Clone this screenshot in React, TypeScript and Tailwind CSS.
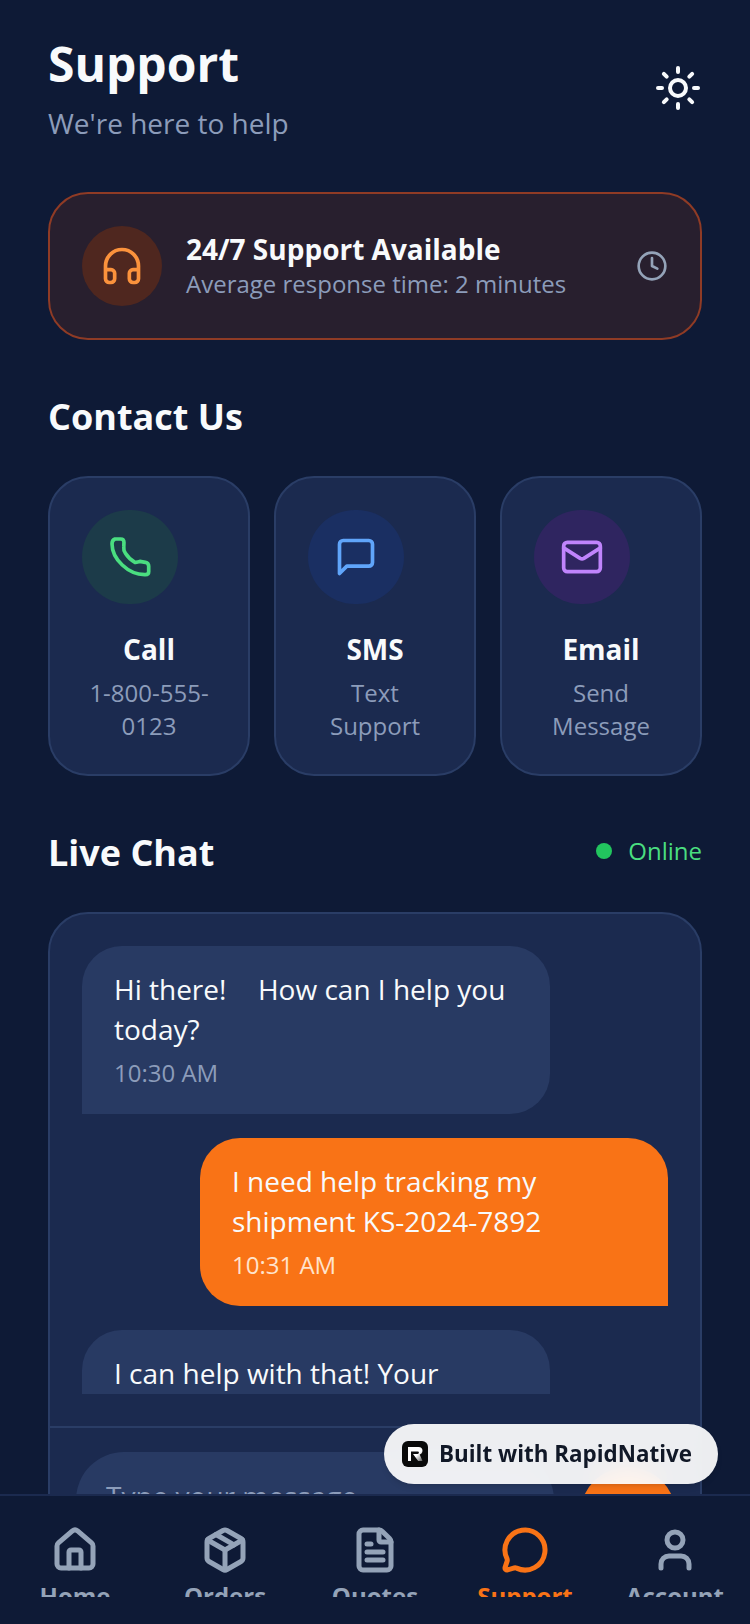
import { Clock, FileText, Headphones, House, Mail, MessageCircle, Package, Sun, User } from "lucide-react"

function PhoneIcon() {
  return (
    <svg width="44" height="44" viewBox="0 0 24 24" fill="none" stroke="#4ade80" strokeWidth="2" strokeLinejoin="round">
      <path d="M3.800 2.200H6.900Q8.700 2.200 8.700 4L8.600 6.500Q8.400 8.400 9.500 10Q11.500 13.200 14.700 14.900Q16 15 17.400 14.400L20.400 14.900Q22.200 15.300 22.200 17.100V20Q22.200 21.600 20.400 21.600C11 21.800 2.200 13 2.200 4.900Q2.100 2.900 3.800 2.200Z" />
    </svg>
  )
}

function ChatIcon() {
  return (
    <svg width="44" height="44" viewBox="0 0 24 24" fill="none" stroke="#60a5fa" strokeWidth="2" strokeLinejoin="round">
      <path d="M21 15a2 2 0 0 1-2 2H7l-4 4V5a2 2 0 0 1 2-2h14a2 2 0 0 1 2 2z" />
    </svg>
  )
}

function MailIcon() {
  return <Mail size={44} strokeWidth={2} color="#c084fc" />
}

const contacts = [
  { title: "Call", lines: ["1-800-555-", "0123"], Icon: PhoneIcon, circle: "bg-[#1c3b49]" },
  { title: "SMS", lines: ["Text", "Support"], Icon: ChatIcon, circle: "bg-[#1a2f62]" },
  { title: "Email", lines: ["Send", "Message"], Icon: MailIcon, circle: "bg-[#2f2560]" },
]

const tabs = [
  { label: "Home", Icon: House },
  { label: "Orders", Icon: Package },
  { label: "Quotes", Icon: FileText },
  { label: "Support", Icon: MessageCircle, active: true },
  { label: "Account", Icon: User },
]

export default function App() {
  return (
    <div className="relative flex h-[1624px] w-[750px] flex-col overflow-hidden bg-[#0e1a36] font-['Open_Sans',sans-serif] text-[#f8fafc]">
      <div className="h-[1494px] shrink-0 overflow-hidden px-12 pt-8">
        {/* Header */}
        <div className="flex items-center justify-between">
          <div>
            <h1 className="text-[48px] leading-[64px] font-bold">Support</h1>
            <p className="mt-[7px] mb-px text-[28px] leading-[40px] text-[#8c9cba]">We're here to help</p>
          </div>
          <button className="flex h-12 w-12 items-center justify-center">
            <Sun size={48} strokeWidth={2} color="#f8fafc" />
          </button>
        </div>

        {/* Availability banner */}
        <div className="mt-12 flex h-[148px] items-center rounded-[40px] border-2 border-[#8f3b25] bg-[#281f2e] px-8">
          <div className="flex h-20 w-20 shrink-0 items-center justify-center rounded-full bg-[#4f271f]">
            <Headphones size={44} strokeWidth={2} color="#fb923c" />
          </div>
          <div className="ml-6 flex-1">
            <p className="text-[28px] leading-[35px] font-bold">24/7 Support Available</p>
            <p className="mt-px text-[24px] leading-[32px] text-[#8c9cba]">Average response time: 2 minutes</p>
          </div>
          <Clock size={32} strokeWidth={2} color="#94a3b8" />
        </div>

        {/* Contact */}
        <h2 className="mt-[53px] text-[36px] leading-[48px] font-bold">Contact Us</h2>
        <div className="mt-[35px] grid grid-cols-3 gap-6">
          {contacts.map(({ title, lines, Icon, circle }) => (
            <div key={title} className="flex h-[300px] flex-col rounded-[40px] border-2 border-[#2a3d66] bg-[#1b2a4f] p-8">
              <div className={`flex h-24 w-24 items-center justify-center rounded-full ${circle}`}>
                <Icon />
              </div>
              <p className="mt-[25px] text-center text-[28px] leading-[40px] font-bold">{title}</p>
              <p className="mt-[7px] text-center text-[24px] leading-[33px] text-[#8c9cba]">
                {lines[0]}
                <br />
                {lines[1]}
              </p>
            </div>
          ))}
        </div>

        {/* Live chat */}
        <div className="mt-[53px] flex items-center justify-between">
          <h2 className="text-[36px] leading-[48px] font-bold">Live Chat</h2>
          <div className="mb-1 flex items-center gap-4">
            <span className="h-4 w-4 rounded-full bg-[#22c55e]" />
            <span className="text-[24px] leading-[32px] text-[#4ade80]">Online</span>
          </div>
        </div>

        <div className="mt-[35px] h-[800px] rounded-[40px] border-2 border-[#2a3d66] bg-[#1b2a4f]">
          <div className="m-8 flex h-[448px] flex-col gap-6 overflow-hidden">
            <div className="h-[168px] w-[468px] shrink-0 rounded-[40px] rounded-bl-none bg-[#283a63] px-8 pt-[23px]">
              <p className="text-[28px] leading-[40px]">
                Hi there! <span className="inline-block w-[17px]" /> How can I help you today?
              </p>
              <p className="mt-2 text-[24px] leading-[32px] text-[#8c9cba]">10:30 AM</p>
            </div>
            <div className="h-[168px] w-[468px] shrink-0 self-end rounded-[40px] rounded-br-none bg-[#f97316] px-8 pt-[23px]">
              <p className="text-[28px] leading-[40px]">I need help tracking my shipment KS-2024-7892</p>
              <p className="mt-2 text-[24px] leading-[32px] text-[#ffe3cc]">10:31 AM</p>
            </div>
            <div className="w-[468px] shrink-0 rounded-[40px] rounded-bl-none bg-[#283a63] px-8 pt-[23px] pb-6">
              <p className="text-[28px] leading-[40px]">I can help with that! Your shipment is on the way.</p>
            </div>
          </div>
          <div className="flex items-start gap-[26px] border-t-2 border-[#2a3d66] py-6 pr-6 pl-[26px]">
            <div className="h-[96px] flex-1 rounded-[48px] bg-[#283a63] px-[30px] py-6 text-[28px] leading-[40px] text-[#8c9cba]">
              Type your message...
            </div>
            <div className="mt-[15px] h-24 w-24 shrink-0 rounded-full bg-[#f97316]" />
          </div>
        </div>
      </div>

      {/* Tab bar */}
      <div className="flex flex-1 border-t-2 border-[#1b2a4f] bg-[#0e1a36] pt-[30px]">
        {tabs.map(({ label, Icon, active }) => (
          <div key={label} className="flex w-[150px] flex-col items-center">
            <Icon size={48} strokeWidth={2.5} color={active ? "#f97316" : "#94a3b8"} />
            <div className="mt-[5px] h-[18px] overflow-hidden">
              <span className={`block text-[24px] leading-[33px] font-bold ${active ? "text-[#f97316]" : "text-[#94a3b8]"}`}>{label}</span>
            </div>
          </div>
        ))}
      </div>

      {/* Built with badge */}
      <div className="absolute top-[1424px] left-[384px] flex h-[60px] w-[334px] items-center gap-[11px] rounded-full bg-white/[0.92] pl-[18px] shadow-md backdrop-blur-md">
        <svg width="26" height="26" viewBox="0 0 26 26">
          <defs>
            <linearGradient id="rapid-stem" x1="0" y1="0" x2="1" y2="1">
              <stop offset="0" stopColor="#ffffff" />
              <stop offset="0.6" stopColor="#ffffff" />
              <stop offset="1" stopColor="#555555" />
            </linearGradient>
          </defs>
          <rect width="26" height="26" rx="6" fill="#0a0a0a" />
          <path d="M6 6h10.500c2.600 0 4 1.600 4 3.800 0 2-1.200 3.300-2.800 3.700L20.500 20h-4.300L11 13h4.500c.9 0 1.400-.5 1.400-1.200 0-.8-.5-1.300-1.400-1.300H9v9.500H6z" fill="url(#rapid-stem)" />
        </svg>
        <span className="text-[22.4px] leading-[32px] font-bold text-[#111827]">Built with RapidNative</span>
      </div>
    </div>
  )
}
